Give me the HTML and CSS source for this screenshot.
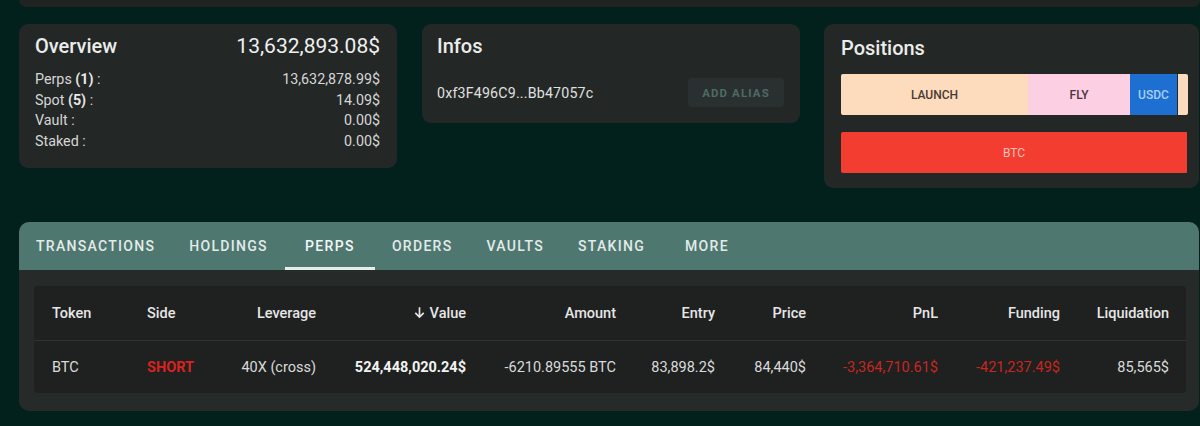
FILE: index.html
```html
<!DOCTYPE html>
<html lang="en">
<head>
<meta charset="utf-8">
<title>Portfolio</title>
<link rel="stylesheet" href="styles.css">
</head>
<body>
<div class="topbar"></div>
<div class="cards">
  <section class="card overview">
    <div class="card-head">
      <h2 class="title">Overview</h2>
      <div class="total">13,632,893.08$</div>
    </div>
    <div class="kv"><span>Perps <b>(1)</b> :</span><span>13,632,878.99$</span></div>
    <div class="kv"><span>Spot <b>(5)</b> :</span><span>14.09$</span></div>
    <div class="kv"><span>Vault :</span><span>0.00$</span></div>
    <div class="kv"><span>Staked :</span><span>0.00$</span></div>
  </section>
  <section class="card infos">
    <h2 class="title">Infos</h2>
    <div class="addr-row">
      <span class="addr">0xf3F496C9...Bb47057c</span>
      <button class="alias-btn">ADD ALIAS</button>
    </div>
  </section>
  <section class="card positions">
    <h2 class="title">Positions</h2>
    <div class="bar">
      <div class="seg seg-launch" style="width:187px">LAUNCH</div>
      <div class="seg seg-fly" style="width:102px">FLY</div>
      <div class="seg seg-usdc" style="width:47px">USDC</div>
      <div class="seg seg-rest" style="width:10px"></div>
    </div>
    <div class="bar">
      <div class="seg seg-btc" style="width:346px">BTC</div>
    </div>
  </section>
</div>

<section class="panel">
  <nav class="tabs">
    <div class="tab">TRANSACTIONS</div>
    <div class="tab">HOLDINGS</div>
    <div class="tab active">PERPS</div>
    <div class="tab">ORDERS</div>
    <div class="tab">VAULTS</div>
    <div class="tab">STAKING</div>
    <div class="tab">MORE</div>
  </nav>
  <div class="panel-body">
    <div class="table">
      <div class="row head">
        <div class="c left">Token</div>
        <div class="c left">Side</div>
        <div class="c">Leverage</div>
        <div class="c"><svg class="arrow" viewBox="0 0 16 16" width="15" height="15"><path d="M8 2.5v10M3.5 8.3 8 12.8l4.5-4.5" fill="none" stroke="#e6e6e6" stroke-width="1.8"/></svg>Value</div>
        <div class="c">Amount</div>
        <div class="c">Entry</div>
        <div class="c">Price</div>
        <div class="c">PnL</div>
        <div class="c">Funding</div>
        <div class="c">Liquidation</div>
      </div>
      <div class="row body">
        <div class="c left">BTC</div>
        <div class="c left short">SHORT</div>
        <div class="c">40X (cross)</div>
        <div class="c strong">524,448,020.24$</div>
        <div class="c">-6210.89555 BTC</div>
        <div class="c">83,898.2$</div>
        <div class="c">84,440$</div>
        <div class="c neg">-3,364,710.61$</div>
        <div class="c neg">-421,237.49$</div>
        <div class="c">85,565$</div>
      </div>
    </div>
  </div>
</section>
</body>
</html>
```

FILE: styles.css
```css
* { box-sizing: border-box; }

html, body {
  margin: 0;
  padding: 0;
}

body {
  width: 1200px;
  height: 426px;
  overflow: hidden;
  background: #03211c;
  font-family: Roboto, "Liberation Sans", sans-serif;
  color: #dcdcdc;
}

.topbar {
  height: 7px;
  margin-left: 19px;
  background: #1f2322;
  border-radius: 0 0 8px 8px;
}

.cards {
  display: flex;
  align-items: flex-start;
  gap: 25px;
  margin: 17px 0 0 19px;
}

.card {
  background: #232726;
  border-radius: 9px;
}

.title {
  margin: 0;
  font-size: 20px;
  font-weight: 500;
  line-height: 26px;
  color: #ececec;
}

.overview {
  width: 378px;
  height: 144px;
  padding: 9px 17px 0 16px;
}

.card-head {
  display: flex;
  justify-content: space-between;
  align-items: center;
  margin-bottom: 10px;
}

.total {
  font-size: 21px;
  color: #f0f0f0;
}

.kv {
  display: flex;
  justify-content: space-between;
  font-size: 14.3px;
  line-height: 20.5px;
  color: #d6d6d6;
}

.kv b { font-weight: 700; color: #e8e8e8; }

.infos {
  width: 378px;
  height: 99px;
  padding: 9px 16px 0 15px;
}

.addr-row {
  display: flex;
  justify-content: space-between;
  align-items: center;
  margin-top: 19px;
}

.addr {
  font-size: 14.2px;
  color: #e0e0e0;
  letter-spacing: 0.2px;
}

.alias-btn {
  width: 96px;
  height: 29px;
  border: none;
  border-radius: 4px;
  background: #2a302f;
  color: #4c6c64;
  font-family: Roboto, "Liberation Sans", sans-serif;
  font-size: 11.5px;
  font-weight: 700;
  letter-spacing: 1.1px;
}

.positions {
  width: 375px;
  height: 164px;
  margin-left: -1px;
  padding: 11px 11px 0 17px;
}

.positions .title { margin-bottom: 13px; }

.bar {
  display: flex;
  height: 41px;
  margin-bottom: 17px;
  border-radius: 2px;
  overflow: hidden;
}

.seg {
  display: flex;
  align-items: center;
  justify-content: center;
  font-size: 12px;
  font-weight: 500;
}

.seg-launch { background: #fddcbd; color: #4a3a33; }
.seg-fly { background: #fdcfe2; color: #4c3440; }
.seg-usdc { background: #1d6fd2; color: #a9cdf5; }
.seg-rest { background: #f9dcbe; margin-left: 1px; }
.seg-btc { background: #f33d30; color: #f9c2b9; font-weight: 400; }

.panel {
  width: 1180px;
  height: 189px;
  margin: 34px 0 0 19px;
  background: #262a29;
  border-radius: 10px;
  overflow: hidden;
}

.tabs {
  display: flex;
  height: 48px;
  background: #4e7770;
}

.tab {
  position: relative;
  display: flex;
  align-items: center;
  justify-content: center;
  min-width: 90px;
  padding: 0 17px;
  font-size: 14px;
  font-weight: 500;
  letter-spacing: 1.3px;
  color: #e3ebe9;
}

.tab.active { color: #f4f7f6; }

.tab.active::after {
  content: "";
  position: absolute;
  left: 0;
  right: 0;
  bottom: 0;
  height: 3px;
  background: #e6eeec;
}

.panel-body {
  padding: 16px 13px 0 15px;
}

.table {
  background: #1e2120;
  border-radius: 4px;
}

.row {
  display: grid;
  grid-template-columns: 97px 94px 107px 150px 150px 99px 91px 132px 122px 109px;
  align-items: center;
}

.row.head {
  height: 55px;
  border-bottom: 1px solid #2e3332;
  font-weight: 500;
  color: #e6e6e6;
}

.row.body {
  height: 52px;
  color: #dadada;
}

.c {
  padding: 0 16px;
  font-size: 14.5px;
  text-align: right;
  white-space: nowrap;
}

.c.left { text-align: left; }
.c:first-child { padding-left: 18px; }

.arrow {
  vertical-align: -2px;
  margin-right: 3px;
}

.short { color: #d8231f; font-weight: 700; }
.strong { font-weight: 700; color: #f2f2f2; }
.neg { color: #c8261f; }
```
